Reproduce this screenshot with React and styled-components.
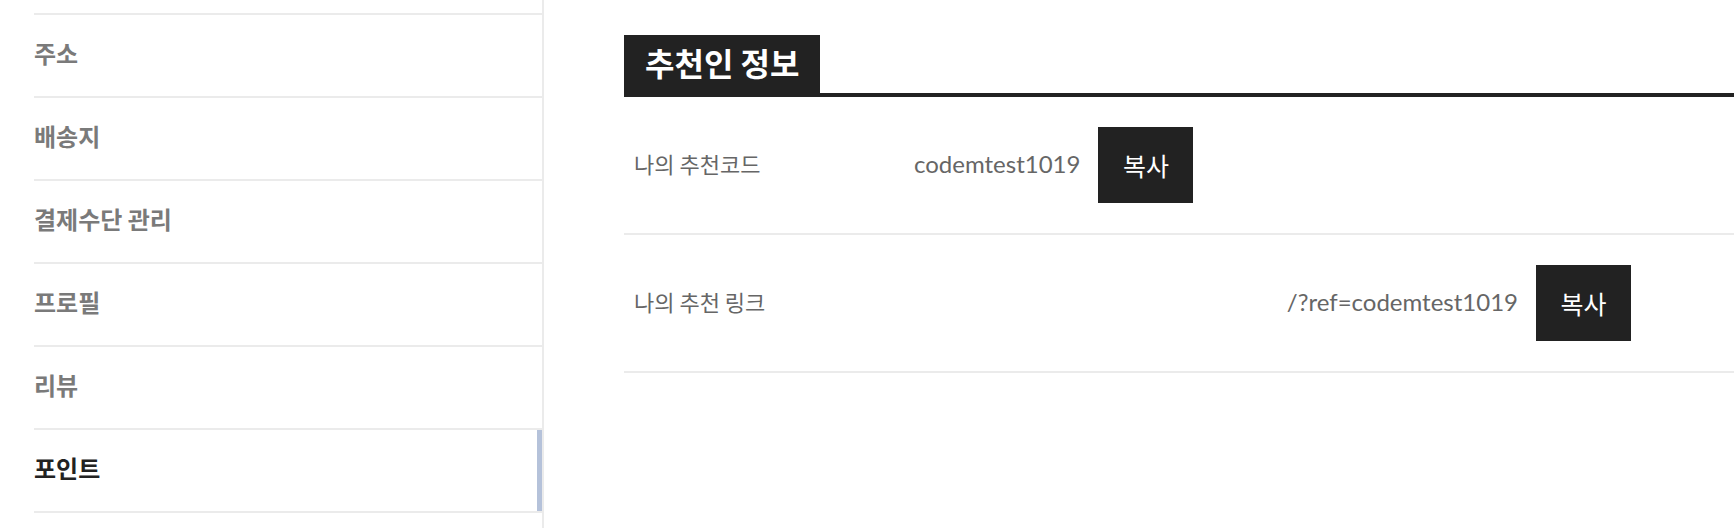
import React from 'react';
import styled, { createGlobalStyle } from 'styled-components';

const GlobalStyle = createGlobalStyle`
  html, body {
    margin: 0;
    padding: 0;
    background: #fff;
  }
  body {
    font-family: Lato, "Noto Sans CJK KR", sans-serif;
    color: #222;
  }
  * { box-sizing: border-box; }
`;

const menuItems = [
  { label: '주소' },
  { label: '배송지' },
  { label: '결제수단 관리' },
  { label: '프로필' },
  { label: '리뷰' },
  { label: '포인트', active: true },
];

const Page = styled.div`
  display: flex;
  height: 528px;
  overflow: hidden;
`;

const Sidebar = styled.nav`
  flex: 0 0 544px;
  padding: 13px 0 0 34px;
  border-right: 2px solid #ebebeb;
`;

const MenuList = styled.ul`
  list-style: none;
  margin: 0;
  padding: 0;
  border-top: 2px solid #ebebeb;
`;

const MenuItem = styled.li`
  display: flex;
  align-items: center;
  height: 83px;
  padding-bottom: 6px;
  border-bottom: 2px solid #ebebeb;
  font-family: "Noto Sans CJK KR", sans-serif;
  font-size: 24px;
  font-weight: 700;
  color: ${p => (p.$active ? '#222' : '#7a7a7a')};
  box-shadow: ${p => (p.$active ? 'inset -5px 0 0 #b5c2da' : 'none')};
  cursor: pointer;
`;

const Main = styled.main`
  flex: 1;
  padding: 35px 0 0 80px;
`;

const SectionHead = styled.div`
  display: flex;
  border-bottom: 4px solid #222;
`;

const SectionTitle = styled.h2`
  margin: 0;
  height: 58px;
  padding: 0 21px 4px;
  background: #222;
  color: #fff;
  font-family: "Noto Sans CJK KR", sans-serif;
  font-size: 32px;
  font-weight: 700;
  line-height: 54px;
`;

const Row = styled.div`
  display: flex;
  align-items: center;
  height: 138px;
  padding-left: 10px;
  border-bottom: 2px solid #ebebeb;
`;

const Label = styled.div`
  flex: 0 0 280px;
  margin-bottom: 4px;
  font-family: "Noto Sans CJK KR", sans-serif;
  font-size: 22px;
  font-weight: 400;
  color: #666;
`;

const Value = styled.div`
  width: ${p => (p.$width ? `${p.$width}px` : 'auto')};
  margin-bottom: 4px;
  text-align: right;
  font-size: 24px;
  color: #666;
`;

const CopyButton = styled.button`
  width: 95px;
  height: 76px;
  margin-left: 18px;
  padding: 0;
  border: none;
  background: #222;
  color: #fff;
  font-family: "Noto Sans CJK KR", sans-serif;
  font-size: 25px;
  cursor: pointer;
`;

export default function App() {
  return (
    <>
      <GlobalStyle />
      <Page>
        <Sidebar>
          <MenuList>
            {menuItems.map(item => (
              <MenuItem key={item.label} $active={item.active}>
                {item.label}
              </MenuItem>
            ))}
          </MenuList>
        </Sidebar>
        <Main>
          <SectionHead>
            <SectionTitle>추천인 정보</SectionTitle>
          </SectionHead>
          <Row>
            <Label>나의 추천코드</Label>
            <Value>codemtest1019</Value>
            <CopyButton>복사</CopyButton>
          </Row>
          <Row>
            <Label>나의 추천 링크</Label>
            <Value $width={604}>/?ref=codemtest1019</Value>
            <CopyButton>복사</CopyButton>
          </Row>
        </Main>
      </Page>
    </>
  );
}
